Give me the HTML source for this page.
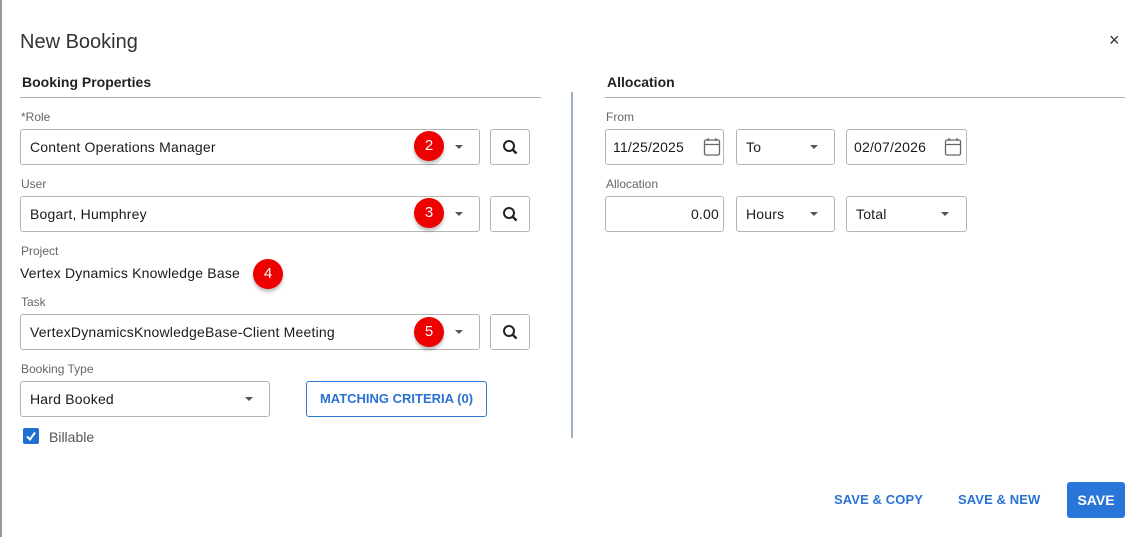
<!DOCTYPE html>
<html><head><meta charset="utf-8"><style>
*{box-sizing:border-box;margin:0;padding:0}
body{width:1139px;height:537px;background:#fff;font-family:"Liberation Sans",sans-serif;color:#222;position:relative;overflow:hidden}
.a{position:absolute}
.lbl{position:absolute;font-size:12px;color:#666}
.inp{position:absolute;border:1px solid #b4b4b4;border-radius:3px;height:36px;font-size:14px;line-height:34px;padding-left:9px;color:#1a1a1a;background:#fff;letter-spacing:0.2px}
.arr{position:absolute;width:0;height:0;border-left:4px solid transparent;border-right:4px solid transparent;border-top:4px solid #555}
.sb{position:absolute;width:40px;height:36px;border:1px solid #b4b4b4;border-radius:3px}
.badge{position:absolute;width:30px;height:30px;border-radius:50%;background:#e00;color:#fff;font-size:15px;text-align:center;line-height:30px;box-shadow:0 3px 3px rgba(0,0,0,.25)}
.h{position:absolute;font-size:14px;font-weight:bold;color:#222}
.btn{position:absolute;font-size:13px;font-weight:bold;color:#2a72d4;letter-spacing:0.1px}
</style></head><body>
<div class="a" style="left:0;top:0;width:2px;height:537px;background:#9a9a9a"></div>
<div class="a" style="left:20px;top:31px;font-size:20px;color:#333">New Booking</div>
<div class="a" style="left:1109px;top:30px;font-size:18px;color:#333">×</div>

<div class="h" style="left:22px;top:74px">Booking Properties</div>
<div class="a" style="left:20px;top:97px;width:521px;height:1px;background:#a8b0ba"></div>
<div class="a" style="left:571px;top:92px;width:2px;height:346px;background:#9fb0c2"></div>

<div class="lbl" style="left:21px;top:110px">*Role</div>
<div class="inp" style="left:20px;top:129px;width:460px">Content Operations Manager</div>
<div class="arr" style="left:455px;top:145px"></div>
<div class="sb" style="left:490px;top:129px"><svg width="40" height="36" viewBox="0 0 40 36"><circle cx="18" cy="16" r="5" fill="none" stroke="#222" stroke-width="2"/><path d="M21.5 19.5 L25.5 23.5" stroke="#222" stroke-width="2.4"/></svg></div>
<div class="badge" style="left:414px;top:131px">2</div>

<div class="lbl" style="left:21px;top:177px">User</div>
<div class="inp" style="left:20px;top:196px;width:460px">Bogart, Humphrey</div>
<div class="arr" style="left:455px;top:212px"></div>
<div class="sb" style="left:490px;top:196px"><svg width="40" height="36" viewBox="0 0 40 36"><circle cx="18" cy="16" r="5" fill="none" stroke="#222" stroke-width="2"/><path d="M21.5 19.5 L25.5 23.5" stroke="#222" stroke-width="2.4"/></svg></div>
<div class="badge" style="left:414px;top:198px">3</div>

<div class="lbl" style="left:21px;top:244px">Project</div>
<div class="a" style="left:20px;top:265px;font-size:14px;color:#1a1a1a;letter-spacing:0.2px">Vertex Dynamics Knowledge Base</div>
<div class="badge" style="left:253px;top:259px">4</div>

<div class="lbl" style="left:21px;top:295px">Task</div>
<div class="inp" style="left:20px;top:314px;width:460px">VertexDynamicsKnowledgeBase-Client Meeting</div>
<div class="arr" style="left:455px;top:330px"></div>
<div class="sb" style="left:490px;top:314px"><svg width="40" height="36" viewBox="0 0 40 36"><circle cx="18" cy="16" r="5" fill="none" stroke="#222" stroke-width="2"/><path d="M21.5 19.5 L25.5 23.5" stroke="#222" stroke-width="2.4"/></svg></div>
<div class="badge" style="left:414px;top:317px">5</div>

<div class="lbl" style="left:21px;top:362px">Booking Type</div>
<div class="inp" style="left:20px;top:381px;width:250px">Hard Booked</div>
<div class="arr" style="left:245px;top:397px"></div>
<div class="a" style="left:306px;top:381px;width:181px;height:36px;border:1px solid #2a78d6;border-radius:3px;color:#2a72d4;font-size:13px;font-weight:bold;text-align:center;line-height:34px">MATCHING CRITERIA (0)</div>

<div class="a" style="left:23px;top:428px;width:16px;height:16px;background:#1e6fd0;border-radius:2px"><svg width="16" height="16"><path d="M4 8.5 L7 11.5 L12 4.5" fill="none" stroke="#fff" stroke-width="2"/></svg></div>
<div class="a" style="left:49px;top:429px;font-size:14px;color:#555">Billable</div>

<div class="h" style="left:607px;top:74px">Allocation</div>
<div class="a" style="left:605px;top:97px;width:520px;height:1px;background:#a8b0ba"></div>

<div class="lbl" style="left:606px;top:110px">From</div>
<div class="inp" style="left:605px;top:129px;width:119px;padding-left:7px">11/25/2025</div>
<svg class="a" style="left:703px;top:137px" width="18" height="20"><rect x="1.5" y="3" width="15" height="15" rx="1.5" fill="none" stroke="#666" stroke-width="1.3"/><path d="M1.5 7.5H16.5M5 1v3M13 1v3" stroke="#666" stroke-width="1.3"/></svg>
<div class="inp" style="left:736px;top:129px;width:99px">To</div>
<div class="arr" style="left:810px;top:145px"></div>
<div class="inp" style="left:846px;top:129px;width:121px;padding-left:7px">02/07/2026</div>
<svg class="a" style="left:944px;top:137px" width="18" height="20"><rect x="1.5" y="3" width="15" height="15" rx="1.5" fill="none" stroke="#666" stroke-width="1.3"/><path d="M1.5 7.5H16.5M5 1v3M13 1v3" stroke="#666" stroke-width="1.3"/></svg>

<div class="lbl" style="left:606px;top:177px">Allocation</div>
<div class="inp" style="left:605px;top:196px;width:119px;text-align:right;padding-right:4px">0.00</div>
<div class="inp" style="left:736px;top:196px;width:99px">Hours</div>
<div class="arr" style="left:810px;top:212px"></div>
<div class="inp" style="left:846px;top:196px;width:121px">Total</div>
<div class="arr" style="left:941px;top:212px"></div>

<div class="btn" style="left:834px;top:492px">SAVE &amp; COPY</div>
<div class="btn" style="left:958px;top:492px">SAVE &amp; NEW</div>
<div class="a" style="left:1067px;top:482px;width:58px;height:36px;background:#2a75d8;border-radius:3px;color:#fff;font-size:14px;font-weight:bold;text-align:center;line-height:36px">SAVE</div>
</body></html>
